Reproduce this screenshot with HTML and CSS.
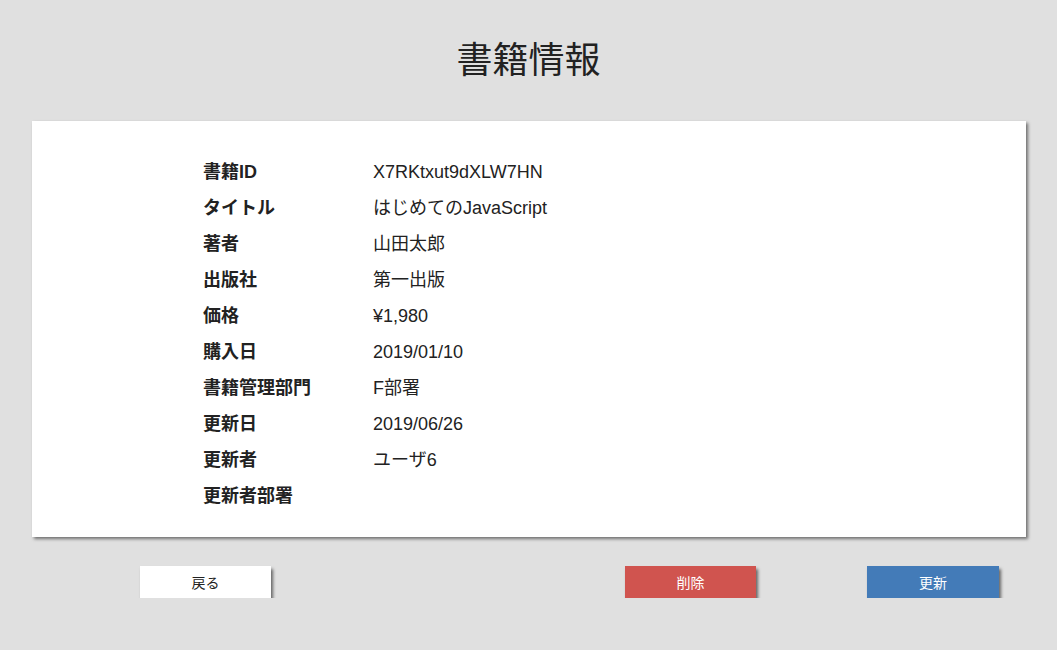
FILE: index.html
```html
<!DOCTYPE html>
<html lang="ja">
<head>
<meta charset="utf-8">
<title>書籍情報</title>
<link rel="stylesheet" href="styles.css">
</head>
<body>
<h1 class="title">書籍情報</h1>
<section class="card">
  <dl class="info">
    <dt>書籍ID</dt><dd>X7RKtxut9dXLW7HN</dd>
    <dt>タイトル</dt><dd>はじめてのJavaScript</dd>
    <dt>著者</dt><dd>山田太郎</dd>
    <dt>出版社</dt><dd>第一出版</dd>
    <dt>価格</dt><dd>¥1,980</dd>
    <dt>購入日</dt><dd>2019/01/10</dd>
    <dt>書籍管理部門</dt><dd>F部署</dd>
    <dt>更新日</dt><dd>2019/06/26</dd>
    <dt>更新者</dt><dd>ユーザ6</dd>
    <dt>更新者部署</dt><dd></dd>
  </dl>
</section>
<div class="actions">
  <button class="btn btn-back">戻る</button>
  <span class="spacer"></span>
  <button class="btn btn-delete">削除</button>
  <button class="btn btn-update">更新</button>
</div>
</body>
</html>
```
FILE: styles.css
```css
html, body {
  margin: 0;
  padding: 0;
  background: #e0e0e0;
  font-family: "Liberation Sans", "Noto Sans CJK JP", sans-serif;
  color: #222;
}
.title {
  margin: 0;
  padding-top: 34px;
  height: 54px;
  line-height: 54px;
  font-size: 36px;
  font-weight: normal;
  text-align: center;
  color: #222;
}
.card {
  margin: 33px 31px 0 32px;
  background: #fff;
  box-shadow: 2px 2px 3px rgba(0, 0, 0, 0.5);
  padding: 32px 0 24px 171px;
}
.info {
  margin: 0;
  display: grid;
  grid-template-columns: 170px 1fr;
  grid-auto-rows: 36px;
  align-items: center;
  font-size: 18px;
  line-height: 36px;
}
.info dt {
  font-weight: bold;
  color: #222;
  padding-top: 2px;
}
.info dd {
  margin: 0;
  color: #222;
  padding-top: 1px;
}
.actions {
  display: flex;
  margin: 29px 0 0 0;
  padding: 0 58px 0 140px;
}
.spacer { flex: 1; }
.btn {
  width: 131px;
  height: 32px;
  border: none;
  font-family: "Liberation Sans", "Noto Sans CJK JP", sans-serif;
  font-size: 14px;
  box-shadow: 2px 3px 3px rgba(0, 0, 0, 0.55);
  cursor: pointer;
  padding: 0;
}
.btn-back { background: #fff; color: #222; }
.btn-delete { background: #d0544f; color: #fff; margin-right: 111px; }
.btn-update { background: #437bb8; color: #fff; width: 132px; }
```
